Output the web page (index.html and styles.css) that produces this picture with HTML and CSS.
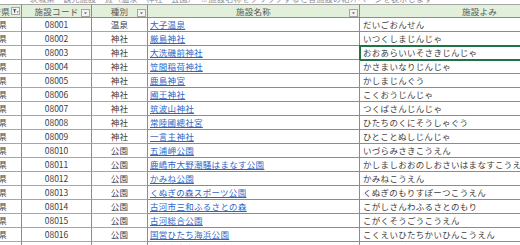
FILE: index.html
```html
<!DOCTYPE html>
<html lang="ja">
<head>
<meta charset="utf-8">
<link rel="stylesheet" href="styles.css">
</head>
<body>
<div class="sheet">
  <div class="caption"><span>茨城県　観光施設一覧（温泉・神社・公園）　※施設名称をクリックすると各施設の紹介ページを表示します</span></div>

  <div class="row head">
    <div class="c a"><span>都道府県</span><span class="fbtn"><svg width="9" height="8" viewBox="0 0 9 8"><rect x="0.5" y="0.5" width="8" height="7" fill="#f3f3f3" stroke="#a6a6a6"/><path d="M1.8 2.2h3.6L4.1 3.8v2.2l-1-0.6V3.8z" fill="#404040"/><path d="M5.6 4.6h2l-1 1.2z" fill="#404040"/></svg></span></div>
    <div class="c b"><span>施設コード</span><span class="fbtn abs"><svg width="9" height="8" viewBox="0 0 9 8"><rect x="0.5" y="0.5" width="8" height="7" fill="#f3f3f3" stroke="#a6a6a6"/><path d="M3 3.4h3l-1.5 1.6z" fill="#404040"/></svg></span></div>
    <div class="c b"><span>種別</span><span class="fbtn abs"><svg width="9" height="8" viewBox="0 0 9 8"><rect x="0.5" y="0.5" width="8" height="7" fill="#f3f3f3" stroke="#a6a6a6"/><path d="M3 3.4h3l-1.5 1.6z" fill="#404040"/></svg></span></div>
    <div class="c b"><span>施設名称</span><span class="fbtn abs"><svg width="9" height="8" viewBox="0 0 9 8"><rect x="0.5" y="0.5" width="8" height="7" fill="#f3f3f3" stroke="#a6a6a6"/><path d="M3 3.4h3l-1.5 1.6z" fill="#404040"/></svg></span></div>
    <div class="c b"><span>施設よみ</span></div>
  </div>

  <div class="row"><div class="c a"><span>茨城県</span></div><div class="c code">08001</div><div class="c kind">温泉</div><div class="c name"><a>大子温泉</a></div><div class="c yomi">だいごおんせん</div></div>
  <div class="row"><div class="c a"><span>茨城県</span></div><div class="c code">08002</div><div class="c kind">神社</div><div class="c name"><a>厳島神社</a></div><div class="c yomi">いつくしまじんじゃ</div></div>
  <div class="row"><div class="c a"><span>茨城県</span></div><div class="c code">08003</div><div class="c kind">神社</div><div class="c name"><a>大洗磯前神社</a></div><div class="c yomi sel">おおあらいいそさきじんじゃ</div></div>
  <div class="row"><div class="c a"><span>茨城県</span></div><div class="c code">08004</div><div class="c kind">神社</div><div class="c name"><a>笠間稲荷神社</a></div><div class="c yomi">かさまいなりじんじゃ</div></div>
  <div class="row"><div class="c a"><span>茨城県</span></div><div class="c code">08005</div><div class="c kind">神社</div><div class="c name"><a>鹿島神宮</a></div><div class="c yomi">かしまじんぐう</div></div>
  <div class="row"><div class="c a"><span>茨城県</span></div><div class="c code">08006</div><div class="c kind">神社</div><div class="c name"><a>國王神社</a></div><div class="c yomi">こくおうじんじゃ</div></div>
  <div class="row"><div class="c a"><span>茨城県</span></div><div class="c code">08007</div><div class="c kind">神社</div><div class="c name"><a>筑波山神社</a></div><div class="c yomi">つくばさんじんじゃ</div></div>
  <div class="row"><div class="c a"><span>茨城県</span></div><div class="c code">08008</div><div class="c kind">神社</div><div class="c name"><a>常陸國總社宮</a></div><div class="c yomi">ひたちのくにそうしゃぐう</div></div>
  <div class="row"><div class="c a"><span>茨城県</span></div><div class="c code">08009</div><div class="c kind">神社</div><div class="c name"><a>一言主神社</a></div><div class="c yomi">ひとことぬしじんじゃ</div></div>
  <div class="row"><div class="c a"><span>茨城県</span></div><div class="c code">08010</div><div class="c kind">公園</div><div class="c name"><a>五浦岬公園</a></div><div class="c yomi">いづらみさきこうえん</div></div>
  <div class="row"><div class="c a"><span>茨城県</span></div><div class="c code">08011</div><div class="c kind">公園</div><div class="c name"><a>鹿嶋市大野潮騒はまなす公園</a></div><div class="c yomi">かしましおおのしおさいはまなすこうえん</div></div>
  <div class="row"><div class="c a"><span>茨城県</span></div><div class="c code">08012</div><div class="c kind">公園</div><div class="c name"><a>かみね公園</a></div><div class="c yomi">かみねこうえん</div></div>
  <div class="row"><div class="c a"><span>茨城県</span></div><div class="c code">08013</div><div class="c kind">公園</div><div class="c name"><a>くぬぎの森スポーツ公園</a></div><div class="c yomi">くぬぎのもりすぽーつこうえん</div></div>
  <div class="row"><div class="c a"><span>茨城県</span></div><div class="c code">08014</div><div class="c kind">公園</div><div class="c name"><a>古河市三和ふるさとの森</a></div><div class="c yomi">こがしさんわふるさとのもり</div></div>
  <div class="row"><div class="c a"><span>茨城県</span></div><div class="c code">08015</div><div class="c kind">公園</div><div class="c name"><a>古河総合公園</a></div><div class="c yomi">こがくそうごうこうえん</div></div>
  <div class="row"><div class="c a"><span>茨城県</span></div><div class="c code">08016</div><div class="c kind">公園</div><div class="c name"><a>国営ひたち海浜公園</a></div><div class="c yomi">こくえいひたちかいひんこうえん</div></div>
  <div class="row"><div class="c a"><span>茨城県</span></div><div class="c code">08017</div><div class="c kind">公園</div><div class="c name"><a>常陸大宮市御前山自然公園</a></div><div class="c yomi">おおみやごぜんやましぜんこうえん</div></div>
</div>
</body>
</html>
```

FILE: styles.css
```css
html, body {
  margin: 0;
  padding: 0;
  overflow: hidden;
  background: #ffffff;
}

body {
  font-family: "Noto Sans CJK JP", "Noto Sans", sans-serif;
  font-size: 8.5px;
  letter-spacing: 0.3px;
  color: #404040;
}

.sheet {
  width: 640px;
}

.caption {
  height: 3px;
  margin-bottom: 1px;
  overflow: hidden;
  display: flex;
  align-items: flex-end;
  padding-left: 30px;
  color: #8c8c8c;
  font-size: 8px;
  letter-spacing: 0.3px;
}

.caption span {
  line-height: 8px;
  white-space: nowrap;
}

.row {
  display: grid;
  grid-template-columns: 22px 70px 56px 212px 240px;
  height: 14px;
}

.c {
  box-sizing: border-box;
  border-right: 1px solid #8c8c8c;
  border-bottom: 1px solid #a6a6a6;
  display: flex;
  align-items: center;
  white-space: nowrap;
  overflow: hidden;
  line-height: 13px;
  position: relative;
}

.head .c {
  background: #e2efda;
  color: #595959;
  justify-content: center;
  border-top: 1px solid #a6a6a6;
  border-bottom: 1px solid #8c8c8c;
}

.c.a {
  justify-content: flex-end;
  padding-right: 14px;
}

.head .c.a {
  justify-content: flex-end;
  padding-right: 1px;
  gap: 1px;
}

.fbtn {
  display: flex;
  width: 9px;
  height: 8px;
  flex: none;
}

.fbtn.abs {
  position: absolute;
  right: 1px;
  top: 4px;
}

.code {
  justify-content: center;
  letter-spacing: 0;
}

.kind {
  justify-content: center;
}

.name {
  padding-left: 2px;
  border-bottom-color: #8c8c8c;
}

.name a {
  color: #2f66c6;
  text-decoration: underline;
  text-underline-offset: 1px;
}

.yomi {
  padding-left: 3px;
  border-bottom-color: #8c8c8c;
  border-right: none;
}

.sel {
  outline: 2px solid #217346;
  outline-offset: -1px;
}
```
